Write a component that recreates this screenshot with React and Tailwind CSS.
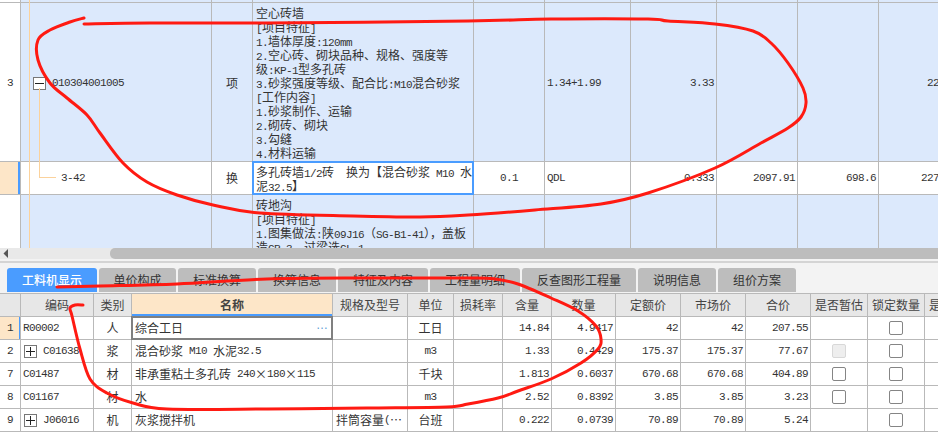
import React from "react";

const LINE = "border-[#b9b9b9]";

function T({ children }) {
  const parts = String(children).split(/([\x00-\x7f]+)/);
  return (
    <>
      {parts.map((p, i) =>
        /^[\x00-\x7f]+$/.test(p) ? (
          <span key={i} className="font-['Liberation_Mono',monospace] text-[11px] tracking-[-0.6px] whitespace-pre">{p}</span>
        ) : (
          <span key={i}>{p}</span>
        )
      )}
    </>
  );
}

const UP = "grid grid-cols-[21px_191px_41px_221px_71px_86px_86px_81px_81px_81px] w-[960px]";
const LOW = "grid grid-cols-[21px_73px_38px_201px_75px_46px_49px_49px_64px_65px_65px_65px_57px_57px_57px] w-[982px]";

function Cell({ children, className = "" }) {
  return <div className={`relative flex items-center overflow-hidden whitespace-nowrap border-r border-b ${LINE} ${className}`}>{children}</div>;
}

const desc3 = ["空心砖墙", "[项目特征]", "1.墙体厚度:120mm", "2.空心砖、砌块品种、规格、强度等", "级:KP-1型多孔砖", "3.砂浆强度等级、配合比:M10混合砂浆", "[工作内容]", "1.砂浆制作、运输", "2.砌砖、砌块", "3.勾缝", "4.材料运输"];
const desc5 = ["砖地沟", "[项目特征]", "1.图集做法:陕09J16（SG-B1-41），盖板", "造CR-3，过梁选CL-1"];

function Lines({ lines }) {
  return (
    <div className="pl-[3px] pt-px">
      {lines.map((l) => (
        <div key={l} className="h-[14px]"><T>{l}</T></div>
      ))}
    </div>
  );
}

function Box({ minus }) {
  return (
    <span className="relative mr-[6px] flex h-[13px] w-[13px] shrink-0 items-center justify-center border border-[#777] bg-white">
      <span className="absolute h-px w-[9px] bg-[#222]" />
      {!minus && <span className="absolute h-[9px] w-px bg-[#222]" />}
    </span>
  );
}

function Check({ disabled }) {
  return <span className={`h-[14px] w-[14px] rounded-[2px] border ${disabled ? "border-[#d8d8d8] bg-[#eeeeee]" : "border-[#858585] bg-white"}`} />;
}

const tabs = [
  ["工料机显示", "w-[90px]"],
  ["单价构成", "w-[77px]"],
  ["标准换算", "w-[78px]"],
  ["换算信息", "w-[78px]"],
  ["特征及内容", "w-[90px]"],
  ["工程量明细", "w-[90px]"],
  ["反查图形工程量", "w-[114px]"],
  ["说明信息", "w-[78px]"],
  ["组价方案", "w-[78px]"],
];

const heads = ["", "编码", "类别", "名称", "规格及型号", "单位", "损耗率", "含量", "数量", "定额价", "市场价", "合价", "是否暂估", "锁定数量", "是否计价"];

const rows = [
  ["1", "R00002", false, "人", "综合工日", "", "工日", "14.84", "4.9417", "42", "42", "207.55", null],
  ["2", "C01638", true, "浆", "混合砂浆 M10 水泥32.5", "", "m3", "1.33", "0.4429", "175.37", "175.37", "77.67", "disabled"],
  ["7", "C01487", false, "材", "非承重粘土多孔砖 240×180×115", "", "千块", "1.813", "0.6037", "670.68", "670.68", "404.89", "box"],
  ["8", "C01167", false, "材", "水", "", "m3", "2.52", "0.8392", "3.85", "3.85", "3.23", "box"],
  ["9", "J06016", true, "机", "灰浆搅拌机", "拌筒容量(⋯", "台班", "0.222", "0.0739", "70.89", "70.89", "5.24", null],
];

function smooth(p) {
  let d = `M${p[0][0]} ${p[0][1]}`;
  for (let i = 0; i < p.length - 1; i++) {
    const a = p[Math.max(i - 1, 0)], b = p[i], c = p[i + 1], e = p[Math.min(i + 2, p.length - 1)];
    d += ` C${b[0] + (c[0] - a[0]) / 6} ${b[1] + (c[1] - a[1]) / 6} ${c[0] - (e[0] - b[0]) / 6} ${c[1] - (e[1] - b[1]) / 6} ${c[0]} ${c[1]}`;
  }
  return d;
}

const stroke1 = [[84,18],[70,22],[50,30],[38,40],[38,60],[50,83],[67,98],[87,115],[100,133],[123,163],[147,182],[177,195],[213,205],[260,213],[353,216],[420,217],[468,215],[535,210],[601,204],[648,193],[715,168],[761,143],[788,128],[801,117],[806,103],[803,88],[788,63],[771,43],[753,31],[715,24],[668,21],[648,19],[551,19],[468,21],[267,23],[150,23],[84,24]];
const stroke2 = [[57,287],[100,286],[177,284],[267,279],[367,278],[468,278],[495,279],[518,284],[551,298],[578,311],[596,326],[601,339],[598,349],[581,363],[551,379],[518,391],[498,398],[468,404],[447,407],[367,408],[267,409],[167,409],[133,403],[107,393],[90,379],[80,349],[72,316],[70,308],[75,305],[83,305]];

export default function App() {
  return (
    <div className="relative h-[432px] w-[938px] overflow-hidden bg-white font-['Noto_Sans_CJK_SC',sans-serif] text-[12px] leading-[14px] text-[#333]">
      {/* upper table */}
      <div className="relative h-[248px] overflow-hidden">
        <div className={UP}>
          {Array.from({ length: 10 }).map((_, i) => (
            <Cell key={i} className={`h-[3px] ${i === 0 ? "bg-white" : "bg-[#dce9fc]"}`} />
          ))}
          <Cell className="h-[159px] justify-center bg-white pt-[2px]"><T>3</T></Cell>
          <Cell className="bg-[#dce9fc] pl-[12px] pt-[2px]"><Box minus /><T>010304001005</T></Cell>
          <Cell className="justify-center bg-[#dce9fc] pt-[2px]">项</Cell>
          <Cell className="bg-[#dce9fc]"><Lines lines={desc3} /></Cell>
          <Cell className="bg-[#dce9fc]" />
          <Cell className="bg-[#dce9fc] pl-[2px] pt-[2px]"><T>1.34+1.99</T></Cell>
          <Cell className="justify-end bg-[#dce9fc] pr-[2px] pt-[2px]"><T>3.33</T></Cell>
          <Cell className="bg-[#dce9fc]" />
          <Cell className="bg-[#dce9fc]" />
          <Cell className="justify-end bg-[#dce9fc] pr-[2px] pt-[2px]"><T>226.3</T></Cell>

          <Cell className="h-[33px] bg-[#fde6c8]"><span className="absolute bottom-0 right-0 top-0 w-[2px] bg-[#4a9cff]" /></Cell>
          <Cell className="bg-white pl-[40px]"><T>3-42</T></Cell>
          <Cell className="justify-center bg-white">换</Cell>
          <Cell className="overflow-visible bg-white">
            <Lines lines={["多孔砖墙1/2砖  换为【混合砂浆 M10 水", "泥32.5】"]} />
            <span className="absolute -left-px -top-px bottom-[-1px] right-[-1px] border-2 border-[#4a9cff]" />
          </Cell>
          <Cell className="justify-center bg-white"><T>0.1</T></Cell>
          <Cell className="bg-white pl-[2px]"><T>QDL</T></Cell>
          <Cell className="justify-end bg-white pr-[2px]"><T>0.333</T></Cell>
          <Cell className="justify-end bg-white pr-[2px]"><T>2097.91</T></Cell>
          <Cell className="justify-end bg-white pr-[2px]"><T>698.6</T></Cell>
          <Cell className="justify-end bg-white pr-[2px]"><T>227.37</T></Cell>

          <Cell className="h-[60px] bg-white" />
          <Cell className="bg-[#dce9fc]" />
          <Cell className="bg-[#dce9fc]" />
          <Cell className="items-start bg-[#dce9fc] pt-[2px]"><Lines lines={desc5} /></Cell>
          <Cell className="bg-[#dce9fc]" />
          <Cell className="bg-[#dce9fc]" />
          <Cell className="bg-[#dce9fc]" />
          <Cell className="bg-[#dce9fc]" />
          <Cell className="bg-[#dce9fc]" />
          <Cell className="bg-[#dce9fc]" />
        </div>
        {/* tree guide lines */}
        <span className="absolute bottom-0 left-[29px] top-0 w-px bg-[#fbd29c]" />
        <span className="absolute left-[39px] top-[88px] h-[89px] w-px bg-[#fbd29c]" />
        <span className="absolute left-[39px] top-[177px] h-px w-[17px] bg-[#fbd29c]" />
      </div>

      {/* scrollbar */}
      <div className="flex h-[11px] bg-[#e9e9e9]">
        <svg width="12" height="11" viewBox="0 0 12 11" className="shrink-0"><path d="M8 1 L3.5 5.5 L8 10 Z" fill="#555" /></svg>
        <div className="ml-[98px] flex-1 rounded-l-[5px] bg-[#bdbdbd]" />
      </div>
      <div className="h-[2px] bg-[#f3f3f3]" />
      <div className="h-[2px] bg-[#d4d4d4]" />

      {/* tabs */}
      <div className="flex h-[30px] gap-[2px] bg-[#f3f3f3] pl-[7px] pt-[5px]">
        {tabs.map(([t, w], i) => (
          <div key={t} className={`flex h-[24px] items-center justify-center rounded-t-[3px] ${w} ${i === 0 ? "bg-[#4a9cff] font-medium text-white" : "bg-[#bdbdbd] text-[#333]"}`}>{t}</div>
        ))}
      </div>

      {/* lower table */}
      <div className={`${LOW} border-t ${LINE}`}>
        {heads.map((h, i) => (
          <Cell key={i} className={`h-[23px] justify-center ${i === 3 ? "bg-[#fde6c8] font-bold" : "bg-[#e7e7e7]"} text-[#444]`}>
            {h}
            {i === 3 && <span className="absolute bottom-0 left-0 right-0 h-[2px] bg-[#4a9cff]" />}
          </Cell>
        ))}
        {rows.map((r, ri) => (
          <React.Fragment key={r[0]}>
            <Cell className={`h-[23px] justify-center ${ri === 0 ? "bg-[#fde6c8]" : "bg-white"}`}>
              <T>{r[0]}</T>
              {ri === 0 && <span className="absolute bottom-0 right-[-1px] top-0 w-[2px] bg-[#4a9cff]" />}
            </Cell>
            <Cell className="pl-[2px]">{r[2] && <span className="ml-[1px] flex"><Box /></span>}<T>{r[1]}</T></Cell>
            <Cell className="justify-center">{r[3]}</Cell>
            <Cell className="overflow-visible pl-[3px]">
              <T>{r[4]}</T>
              {ri === 0 && (
                <>
                  <span className="absolute -left-px -top-px bottom-[-1px] right-[-1px] border-2 border-[#808080]" />
                  <span className="absolute right-[4px] top-px font-['Liberation_Sans',sans-serif] text-[#5b9bd5]">…</span>
                </>
              )}
            </Cell>
            <Cell className="pl-[3px]"><T>{r[5]}</T></Cell>
            <Cell className="justify-center"><T>{r[6]}</T></Cell>
            <Cell />
            <Cell className="justify-end pr-[2px]"><T>{r[7]}</T></Cell>
            <Cell className="justify-end pr-[2px]"><T>{r[8]}</T></Cell>
            <Cell className="justify-end pr-[2px]"><T>{r[9]}</T></Cell>
            <Cell className="justify-end pr-[2px]"><T>{r[10]}</T></Cell>
            <Cell className="justify-end pr-[2px]"><T>{r[11]}</T></Cell>
            <Cell className="justify-center">{r[12] && <Check disabled={r[12] === "disabled"} />}</Cell>
            <Cell className="justify-center"><Check /></Cell>
            <Cell />
          </React.Fragment>
        ))}
      </div>

      {/* hand-drawn red annotation */}
      <svg className="pointer-events-none absolute left-0 top-0" width="938" height="432" viewBox="0 0 938 432" fill="none">
        <path d={smooth(stroke1)} stroke="#ff1a12" strokeWidth="3" strokeLinecap="round" strokeLinejoin="round" />
        <path d={smooth(stroke2)} stroke="#ff1a12" strokeWidth="3" strokeLinecap="round" strokeLinejoin="round" />
      </svg>
    </div>
  );
}
